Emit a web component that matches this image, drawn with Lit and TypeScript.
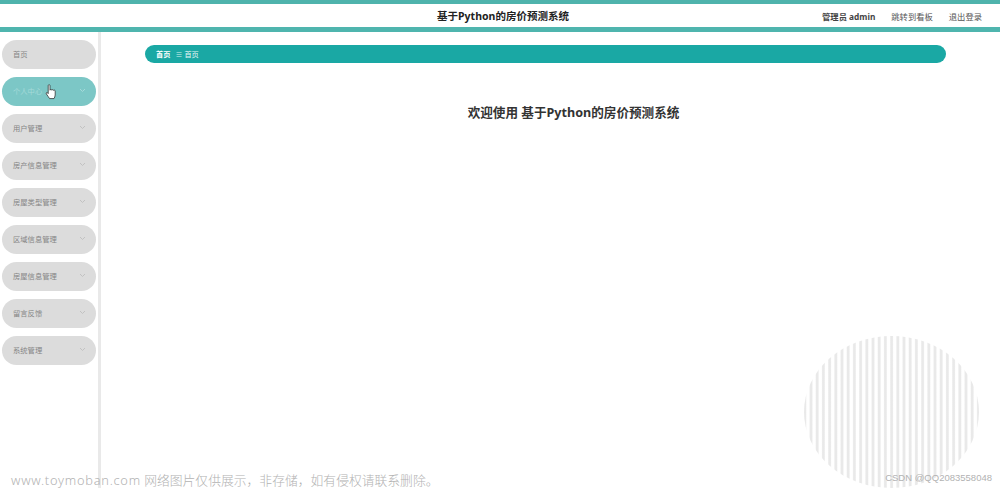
import { LitElement, html, css } from "lit";
import { customElement } from "lit/decorators.js";

const items = ["首页", "个人中心", "用户管理", "房产信息管理", "房屋类型管理", "区域信息管理", "房屋信息管理", "留言反馈", "系统管理"];

@customElement("app-root")
export class AppRoot extends LitElement {
  static styles = css`
    :host { display: block; position: relative; width: 1000px; height: 488px; overflow: hidden; background: #fff; font-family: "Noto Sans", "Noto Sans CJK SC", sans-serif; color: #333; }
    .top { height: 32px; box-sizing: border-box; border-top: 4px solid #4fb3ac; border-bottom: 5px solid #4fb5ae; display: grid; grid-template-columns: 1fr auto 1fr; align-items: center; }
    .title { grid-column: 2; font-size: 10.5px; font-weight: 700; color: #222; padding-left: 6px; }
    .links { display: flex; justify-content: flex-end; gap: 16px; font-size: 8.3px; color: #555; padding-right: 18px; }
    .links b { color: #444; font-weight: 700; }
    .body { display: flex; height: 456px; }
    .side { width: 98px; box-sizing: content-box; border-right: 3px solid #e9e9e9; padding: 8px 0 0 0; display: flex; flex-direction: column; gap: 8px; flex: none; }
    .item { margin-left: 2px; width: 94px; height: 29px; flex: none; border-radius: 15px; background: #dcdcdc; display: flex; align-items: center; justify-content: space-between; padding: 0 10px 2px 11px; box-sizing: border-box; font-size: 7.3px; color: #858585; position: relative; }
    .item.active { background: #7cc7c6; color: #a5dad9; }
    .chev { width: 7px; height: 5px; display: block; }
    .hand { position: absolute; left: 43px; top: 7px; width: 12px; height: 16px; }
    .main { flex: 1; padding: 13px 54px 0 44px; min-width: 0; }
    .crumb { height: 18px; border-radius: 9px; background: #1aa8a4; color: #e8f6f5; font-size: 7.2px; display: flex; align-items: center; gap: 5px; padding-left: 11px; }
    .crumb b { font-weight: 700; color: #fff; }
    .crumb i { font-style: normal; color: #d5f0ee; font-size: 7px; width: 4px; text-align: center; }
    h1 { margin: 41px 0 0; font-size: 12.6px; line-height: 18px; font-weight: 700; color: #333; text-align: center; padding-left: 56px; }
    .circle { position: absolute; left: 804px; top: 336px; width: 175px; height: 152px; border-radius: 50%; background: repeating-linear-gradient(90deg, #e9e9e9 0 1.6px, #ffffff 2.8px 5px, #e9e9e9 6.2px); }
    .wm { position: absolute; color: #b2b2b2; white-space: nowrap; line-height: 16px; }
    .wm1 { left: 11px; top: 472px; font-size: 12.8px; font-weight: 300; }
    .wm1 span { letter-spacing: 0.75px; }
    .wm2 { right: 8px; top: 470px; font-size: 9.5px; font-family: "Liberation Sans", sans-serif; }
  `;

  render() {
    return html`
      <div class="top">
        <div class="title">基于Python的房价预测系统</div>
        <div class="links"><b>管理员 admin</b><span>跳转到看板</span><span>退出登录</span></div>
      </div>
      <div class="body">
        <nav class="side">
          ${items.map((t, i) => html`
            <div class="item ${i === 1 ? "active" : ""}">
              <span>${t}</span>
              ${i === 0 ? "" : html`<svg class="chev" viewBox="0 0 7 5"><path d="M1 1l2.500 2.500L6 1" fill="none" stroke="${i === 1 ? "#a5dad9" : "#c2c2c2"}" stroke-width="1"/></svg>`}
              ${i === 1 ? html`<svg class="hand" viewBox="0 0 12 16"><path d="M3.200 1.600c0-1.200 1.800-1.200 1.800 0v4.600c.2-1 1.600-1 1.800 0 .2-.8 1.600-.8 1.800.2.3-.6 1.600-.4 1.600.6v4c0 1.600-.8 2.600-1.200 3.600H4.600C3.800 13.200 2.600 12 1.400 10 .7 8.900 1.800 8 2.600 8.800l.6.8z" fill="#fff" stroke="#333" stroke-width=".8"/></svg>` : ""}
            </div>`)}
        </nav>
        <main class="main">
          <div class="crumb"><b>首页</b><i>≡</i><span>首页</span></div>
          <h1>欢迎使用 基于Python的房价预测系统</h1>
        </main>
      </div>
      <div class="circle"></div>
      <div class="wm wm1"><span>www.toymoban.com</span> 网络图片仅供展示，非存储，如有侵权请联系删除。</div>
      <div class="wm wm2">CSDN @QQ2083558048</div>
    `;
  }
}
